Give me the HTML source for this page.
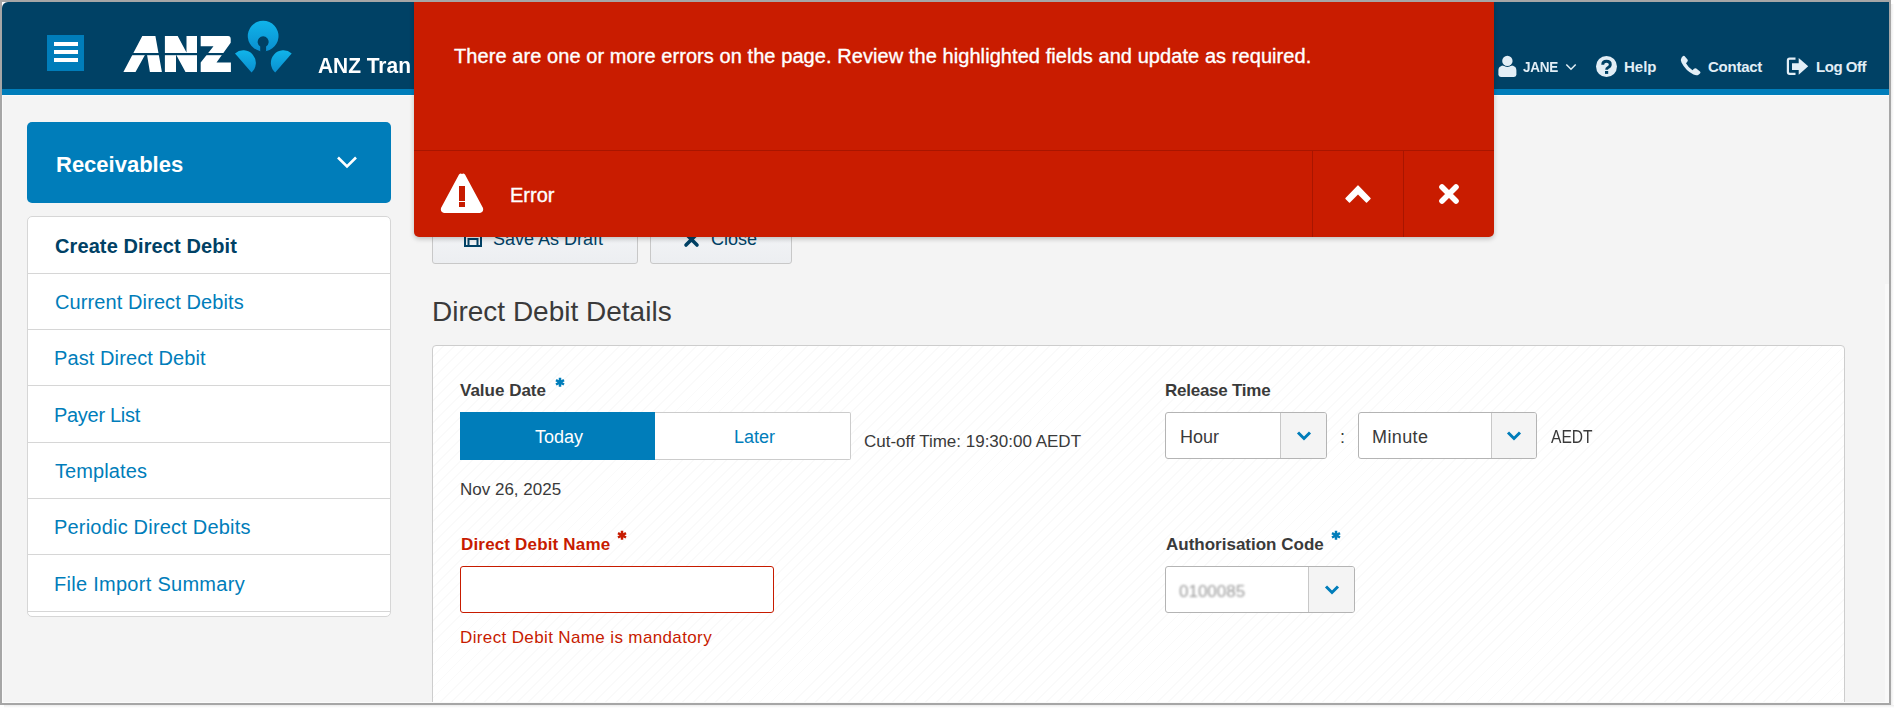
<!DOCTYPE html>
<html><head><meta charset="utf-8">
<style>
*{box-sizing:border-box;margin:0;padding:0}
html,body{width:1897px;height:711px;overflow:hidden;background:#fff;font-family:"Liberation Sans",sans-serif}
.a{position:absolute}
.t{position:absolute;white-space:nowrap}
#wrap{position:absolute;left:0;top:0;width:1889px;height:703px;overflow:hidden;background:#f4f4f4}
.bd{position:absolute;background:#a6a6a6;z-index:50}
.mi{position:absolute;left:55px;font-size:20px;line-height:20px;letter-spacing:0.1px;color:#007dba;white-space:nowrap}
.sep{position:absolute;left:28px;width:362px;height:1px;background:#d6d6d6}
.lbl{position:absolute;white-space:nowrap;font-size:17px;line-height:17px;font-weight:bold;color:#3a3a3a}
.txt{position:absolute;white-space:nowrap;font-size:17px;line-height:17px;color:#3a3a3a}
</style></head>
<body>
<div id="wrap">
  <!-- header -->
  <div class="a" style="left:2px;top:2px;width:8px;height:8px;background:#fff"></div>
  <div class="a" style="left:2px;top:2px;width:1887px;height:87px;background:#004165;border-top-left-radius:6px"></div>
  <div class="a" style="left:2px;top:89px;width:1887px;height:6px;background:#007dba"></div>
  <div class="a" style="left:2px;top:95px;width:1887px;height:1px;background:#fafafa"></div>
  <!-- hamburger -->
  <div class="a" style="left:47px;top:35px;width:37px;height:36px;background:#007dba"></div>
  <div class="a" style="left:54px;top:42px;width:24px;height:4px;background:#fff"></div>
  <div class="a" style="left:54px;top:50px;width:24px;height:4px;background:#fff"></div>
  <div class="a" style="left:54px;top:58px;width:24px;height:4px;background:#fff"></div>
  <!-- logo -->
  <svg class="a" style="left:0;top:0" width="320" height="90" viewBox="0 0 320 90">
    <g transform="translate(120,30)" fill="#fff">
      <path d="M22.3,5.9 L35.4,5.9 L41.9,41.9 L29.9,41.9 L26.9,24 L25.5,24 L15.5,41.9 L3.4,41.9 Z"/>
      <path d="M44.9,5.9 L57.7,5.9 L66.5,22.5 L66.5,5.9 L77,5.9 L77,41.9 L65.5,41.9 L56,24.5 L56,41.9 L44.9,41.9 Z"/>
      <path d="M80.7,5.9 L108,5.9 Q110.7,5.9 110.7,9 L110.7,12.7 L96.5,32.4 L110.9,32.4 L110.9,41.9 L80.7,41.9 L80.7,32.5 L93.5,16.2 L80.7,16.2 Z"/>
      <rect x="0" y="23" width="115" height="2.2" fill="#004165"/>
    </g>
    <defs>
      <linearGradient id="lg" x1="0" y1="0" x2="0" y2="1"><stop offset="0" stop-color="#10b4ea"/><stop offset="1" stop-color="#0a8fd0"/></linearGradient>
    </defs>
    <path fill="url(#lg)" fill-rule="evenodd" d="M263.1,20.7 A15.3,15.3 0 1 1 260.2,51 L260.2,46.5 A5.5,5.5 0 1 1 266.1,46.5 L266.1,51 A15.3,15.3 0 1 1 263.1,20.7 Z"/>
    <path fill="url(#lg)" d="M235,53.4 A12.6,12.6 0 0 1 251.5,72.5 Z"/>
    <path fill="url(#lg)" d="M291.7,53.4 A12.6,12.6 0 0 0 275.2,72.5 Z"/>
  </svg>
  <div class="t" id="title" style="left:318px;top:54.5px;font-size:22px;line-height:22px;font-weight:bold;color:#fff;transform:scaleX(0.95);transform-origin:0 0">ANZ Tran</div>

  <!-- header right -->
  <svg class="a" style="left:1496px;top:54px" width="22" height="24" viewBox="0 0 22 24">
    <path d="M2.4,20.5 L2.4,16.5 C2.4,12.5 5,11.2 11.4,11.2 C17.8,11.2 20.4,12.5 20.4,16.5 L20.4,20.5 Q20.4,22.9 18,22.9 L4.8,22.9 Q2.4,22.9 2.4,20.5 Z" fill="#e2eef6"/>
    <circle cx="11.4" cy="6.9" r="6" fill="#004165"/>
    <circle cx="11.4" cy="6.9" r="5.2" fill="#e2eef6"/>
  </svg>
  <div class="t" id="jane" style="left:1523px;top:58.5px;letter-spacing:-0.3px;transform:scaleX(0.9);transform-origin:0 0;font-size:15px;line-height:15px;font-weight:bold;color:#e2eef6">JANE</div>
  <svg class="a" style="left:1565px;top:63px" width="12" height="8" viewBox="0 0 12 8"><path d="M1.3,1.5 L6,6.2 L10.7,1.5" stroke="#e2eef6" stroke-width="1.5" fill="none"/></svg>
  <svg class="a" style="left:1595px;top:55px" width="23" height="23" viewBox="0 0 23 23">
    <circle cx="11.5" cy="11.5" r="10.5" fill="#e2eef6"/>
    <path d="M7.7,9.8 Q7.7,6.3 11.5,6.3 Q15.3,6.3 15.3,9.5 Q15.3,11.5 13.1,12.5 Q11.6,13.2 11.6,14.8" stroke="#004165" stroke-width="2.9" fill="none"/><rect x="10" y="16" width="3.2" height="2.9" fill="#004165"/>
  </svg>
  <div class="t" id="help" style="left:1624px;top:59px;font-size:15px;line-height:15px;font-weight:bold;color:#e2eef6">Help</div>
  <svg class="a" style="left:1680px;top:55px" width="22" height="21" viewBox="0 0 22 21">
    <path d="M4.5,1 L7.5,4.5 Q8.3,5.5 7.3,6.8 L6,8.2 Q8.5,12.8 12.5,15.2 L14,13.8 Q15.2,12.8 16.3,13.6 L20,16.5 Q21,17.5 20,18.6 L18.5,19.8 Q16.5,21 13.5,19.5 Q5.5,15.5 1.5,7.5 Q0.2,4.5 1.5,2.8 L2.7,1.2 Q3.6,0.2 4.5,1 Z" fill="#e2eef6"/>
  </svg>
  <div class="t" id="contact" style="left:1708px;top:59px;letter-spacing:-0.25px;font-size:15px;line-height:15px;font-weight:bold;color:#e2eef6">Contact</div>
  <svg class="a" style="left:1785px;top:57px" width="24" height="19" viewBox="0 0 24 19">
    <path d="M10.5,1.7 L4.7,1.7 Q2.9,1.7 2.9,3.5 L2.9,15 Q2.9,16.8 4.7,16.8 L10.5,16.8" stroke="#e2eef6" stroke-width="2.2" fill="none"/>
    <path d="M7,6.2 L13.7,6.2 L13.7,0.9 L23.2,9.3 L13.7,17.8 L13.7,13 L7,13 Z" fill="#e2eef6"/>
  </svg>
  <div class="t" id="logoff" style="left:1816px;top:59px;letter-spacing:-0.45px;font-size:15px;line-height:15px;font-weight:bold;color:#e2eef6">Log Off</div>

  <!-- sidebar -->
  <div class="a" style="left:27px;top:122px;width:364px;height:81px;background:#007dba;border-radius:5px"></div>
  <div class="t" id="recv" style="left:56px;top:154px;font-size:22px;line-height:22px;font-weight:bold;color:#fff">Receivables</div>
  <svg class="a" style="left:336px;top:155px" width="22" height="15" viewBox="0 0 22 15"><path d="M2,2.5 L11,11.5 L20,2.5" stroke="#fff" stroke-width="2.6" fill="none"/></svg>

  <div class="a" style="left:27px;top:216px;width:364px;height:401px;background:#fff;border:1px solid #d6d6d6;border-radius:5px"></div>
  <div class="mi" id="m0" style="top:236px;font-weight:bold;color:#004165">Create Direct Debit</div>
  <div class="sep" style="top:273px"></div>
  <div class="mi" id="m1" style="top:292px">Current Direct Debits</div>
  <div class="sep" style="top:329px"></div>
  <div class="mi" id="m2" style="top:348px;left:54px">Past Direct Debit</div>
  <div class="sep" style="top:385px"></div>
  <div class="mi" id="m3" style="top:405px;left:54px;letter-spacing:-0.3px">Payer List</div>
  <div class="sep" style="top:442px"></div>
  <div class="mi" id="m4" style="top:461px">Templates</div>
  <div class="sep" style="top:498px"></div>
  <div class="mi" id="m5" style="top:517px;left:54px;letter-spacing:0.2px">Periodic Direct Debits</div>
  <div class="sep" style="top:554px"></div>
  <div class="mi" id="m6" style="top:574px;left:54px;letter-spacing:0.28px">File Import Summary</div>
  <div class="sep" style="top:611px"></div>

  <!-- buttons (behind banner) -->
  <div class="a" style="left:432px;top:214px;width:206px;height:50px;border:1px solid #c8c8c8;border-radius:3px;background:linear-gradient(#f6f7f9,#eceef1)"></div>
  <svg class="a" style="left:463px;top:229px" width="20" height="19" viewBox="0 0 20 19">
    <path d="M2,2 L15,2 L18,5 L18,17 L2,17 Z" stroke="#004165" stroke-width="2" fill="none"/>
    <rect x="5.5" y="10" width="9" height="7" stroke="#004165" stroke-width="2" fill="none"/>
  </svg>
  <div class="t" id="save" style="left:493px;top:230px;font-size:18px;line-height:18px;color:#004165">Save As Draft</div>
  <div class="a" style="left:650px;top:214px;width:142px;height:50px;border:1px solid #c8c8c8;border-radius:3px;background:linear-gradient(#f6f7f9,#eceef1)"></div>
  <svg class="a" style="left:683px;top:231px" width="17" height="17" viewBox="0 0 17 17"><path d="M3,3 L14,14 M14,3 L3,14" stroke="#004165" stroke-width="3.6" stroke-linecap="round"/></svg>
  <div class="t" id="close" style="left:711px;top:230px;font-size:18px;line-height:18px;color:#004165">Close</div>

  <div class="t" id="ddd" style="left:432px;top:298px;font-size:28px;line-height:28px;color:#3a3a3a">Direct Debit Details</div>

  <!-- panel -->
  <div class="a" style="left:432px;top:345px;width:1413px;height:400px;border:1px solid #cdcdcd;border-radius:4px;background:#fff repeating-linear-gradient(135deg,#fff 0,#fff 6.5px,#fafafa 6.3px,#fafafa 7.8px)"></div>

  <div class="lbl" id="vd" style="left:460px;top:382px">Value Date</div>
  <svg class="a" style="left:554px;top:377px" width="12" height="11" viewBox="0 0 12 11"><path d="M6,0.8 L6,9.8 M2,3.1 L10,7.5 M10,3.1 L2,7.5" stroke="#007dba" stroke-width="2.5"/></svg>
  <div class="a" style="left:460px;top:412px;width:195px;height:48px;background:#007dba"></div>
  <div class="a" style="left:655px;top:412px;width:196px;height:48px;background:#fff;border:1px solid #cccccc;border-left:none;border-radius:0 2px 2px 0"></div>
  <div class="t" id="today" style="left:535px;top:428px;font-size:18px;line-height:18px;color:#fff">Today</div>
  <div class="t" id="later" style="left:734px;top:428px;font-size:18px;line-height:18px;color:#007dba">Later</div>
  <div class="txt" id="cut" style="left:864px;top:433px">Cut-off Time: 19:30:00 AEDT</div>
  <div class="txt" id="nov" style="left:460px;top:481px">Nov 26, 2025</div>

  <div class="lbl" id="ddn" style="left:461px;top:536px;letter-spacing:0.17px;color:#c71b00">Direct Debit Name</div>
  <svg class="a" style="left:616px;top:530px" width="12" height="11" viewBox="0 0 12 11"><path d="M6,0.8 L6,9.8 M2,3.1 L10,7.5 M10,3.1 L2,7.5" stroke="#c71b00" stroke-width="2.5"/></svg>
  <div class="a" style="left:460px;top:566px;width:314px;height:47px;background:#fff;border:1.5px solid #c71b00;border-radius:3px"></div>
  <div class="txt" id="mand" style="left:460px;top:629px;letter-spacing:0.37px;color:#c71b00">Direct Debit Name is mandatory</div>

  <div class="lbl" id="rt" style="left:1165px;top:382px;letter-spacing:-0.25px">Release Time</div>
  <div class="a" style="left:1165px;top:412px;width:162px;height:47px;background:#fff;border:1px solid #b4b4b4;border-radius:3px;overflow:hidden">
    <div class="a" style="left:114px;top:0;width:47px;height:45px;background:#f4f4f4;border-left:1px solid #c8c8c8"></div>
  </div>
  <svg class="a" style="left:1296px;top:430px" width="16" height="12" viewBox="0 0 16 12"><path d="M2,2.5 L8,8.5 L14,2.5" stroke="#007dba" stroke-width="3" fill="none"/></svg>
  <div class="t" id="hour" style="left:1180px;top:428px;font-size:18px;line-height:18px;color:#3a3a3a">Hour</div>
  <div class="t" id="colon" style="left:1340px;top:428px;font-size:18px;line-height:18px;color:#3a3a3a">:</div>
  <div class="a" style="left:1358px;top:412px;width:179px;height:47px;background:#fff;border:1px solid #b4b4b4;border-radius:3px;overflow:hidden">
    <div class="a" style="left:132px;top:0;width:47px;height:45px;background:#f4f4f4;border-left:1px solid #c8c8c8"></div>
  </div>
  <svg class="a" style="left:1506px;top:430px" width="16" height="12" viewBox="0 0 16 12"><path d="M2,2.5 L8,8.5 L14,2.5" stroke="#007dba" stroke-width="3" fill="none"/></svg>
  <div class="t" id="minute" style="left:1372px;top:428px;letter-spacing:0.4px;font-size:18px;line-height:18px;color:#3a3a3a">Minute</div>
  <div class="t" id="aedt" style="left:1550.5px;top:428px;transform:scaleX(0.865);transform-origin:0 0;font-size:18px;line-height:18px;color:#3a3a3a">AEDT</div>

  <div class="lbl" id="ac" style="left:1166px;top:536px">Authorisation Code</div>
  <svg class="a" style="left:1330px;top:530px" width="12" height="11" viewBox="0 0 12 11"><path d="M6,0.8 L6,9.8 M2,3.1 L10,7.5 M10,3.1 L2,7.5" stroke="#007dba" stroke-width="2.5"/></svg>
  <div class="a" style="left:1165px;top:566px;width:190px;height:47px;background:#fff;border:1px solid #b4b4b4;border-radius:3px;overflow:hidden">
    <div class="a" style="left:142px;top:0;width:47px;height:45px;background:#f4f4f4;border-left:1px solid #c8c8c8"></div>
  </div>
  <svg class="a" style="left:1324px;top:584px" width="16" height="12" viewBox="0 0 16 12"><path d="M2,2.5 L8,8.5 L14,2.5" stroke="#007dba" stroke-width="3" fill="none"/></svg>
  <div class="t" id="code" style="left:1179px;top:583px;font-size:17px;line-height:17px;color:#9a9a9a;filter:blur(1.3px)">0100085</div>

  <div class="a" style="left:1885px;top:284px;width:4px;height:419px;background:#f9f9f9"></div>
  <div class="a" style="left:2px;top:96px;width:1px;height:607px;background:#fbfbfb"></div>
  <div class="a" style="left:2px;top:702px;width:1887px;height:1px;background:#fbfbfb"></div>
  <!-- error banner -->
  <div class="a" style="left:414px;top:2px;width:1080px;height:235px;background:#c91c00;border-radius:0 0 5px 5px;box-shadow:0 2px 5px rgba(0,0,0,0.22);z-index:20">
    <div class="a" style="left:0;top:148px;width:1080px;height:1px;background:#a81500"></div>
    <div class="a" style="left:898px;top:148px;width:1px;height:87px;background:#a81500"></div>
    <div class="a" style="left:989px;top:148px;width:1px;height:87px;background:#a81500"></div>
  </div>
  <div class="t" id="msg" style="left:454px;top:46px;letter-spacing:0.072px;-webkit-text-stroke:0.35px #fff;font-size:20px;line-height:20px;color:#fff;z-index:21">There are one or more errors on the page. Review the highlighted fields and update as required.</div>
  <svg class="a" style="left:438px;top:171px;z-index:21" width="48" height="44" viewBox="0 0 48 44">
    <path d="M24,3 Q25.5,2 27,3.5 L45,37 Q46,41 42,42 L6,42 Q2,41 3,37 L21,3.5 Q22.5,2 24,3 Z" fill="#fff"/>
    <rect x="21" y="15" width="6" height="15" fill="#c71b00"/>
    <rect x="21" y="31" width="6" height="5" fill="#c71b00"/>
  </svg>
  <div class="t" id="err" style="left:510px;top:185px;-webkit-text-stroke:0.35px #fff;font-size:20px;line-height:20px;color:#fff;z-index:21">Error</div>
  <svg class="a" style="left:1340px;top:180px;z-index:21" width="36" height="28" viewBox="0 0 36 28"><path d="M17.6,5.5 Q18,5.2 18.4,5.5 L30.5,18 Q31,18.5 30.5,19 L27,22.6 Q26.5,23 26,22.6 L18,14.5 L10,22.6 Q9.5,23 9,22.6 L5.5,19 Q5,18.5 5.5,18 Z" fill="#fff"/></svg>
  <svg class="a" style="left:1436px;top:181px;z-index:21" width="26" height="26" viewBox="0 0 26 26"><path d="M6,6 L20,20 M20,6 L6,20" stroke="#fff" stroke-width="5.6" stroke-linecap="round"/></svg>
</div>
<!-- frame borders -->
<div class="bd" style="left:0;top:0;width:1891px;height:2px"></div>
<div class="bd" style="left:0;top:0;width:2px;height:705px"></div>
<div class="bd" style="left:1889px;top:0;width:2px;height:705px"></div>
<div class="bd" style="left:0;top:703px;width:1891px;height:2px"></div>
<div class="a" style="left:1891px;top:4px;width:3px;height:703px;background:linear-gradient(90deg,#ececec,#fff)"></div>
<div class="a" style="left:4px;top:705px;width:1890px;height:3px;background:linear-gradient(#ececec,#fff)"></div>
</body></html>
